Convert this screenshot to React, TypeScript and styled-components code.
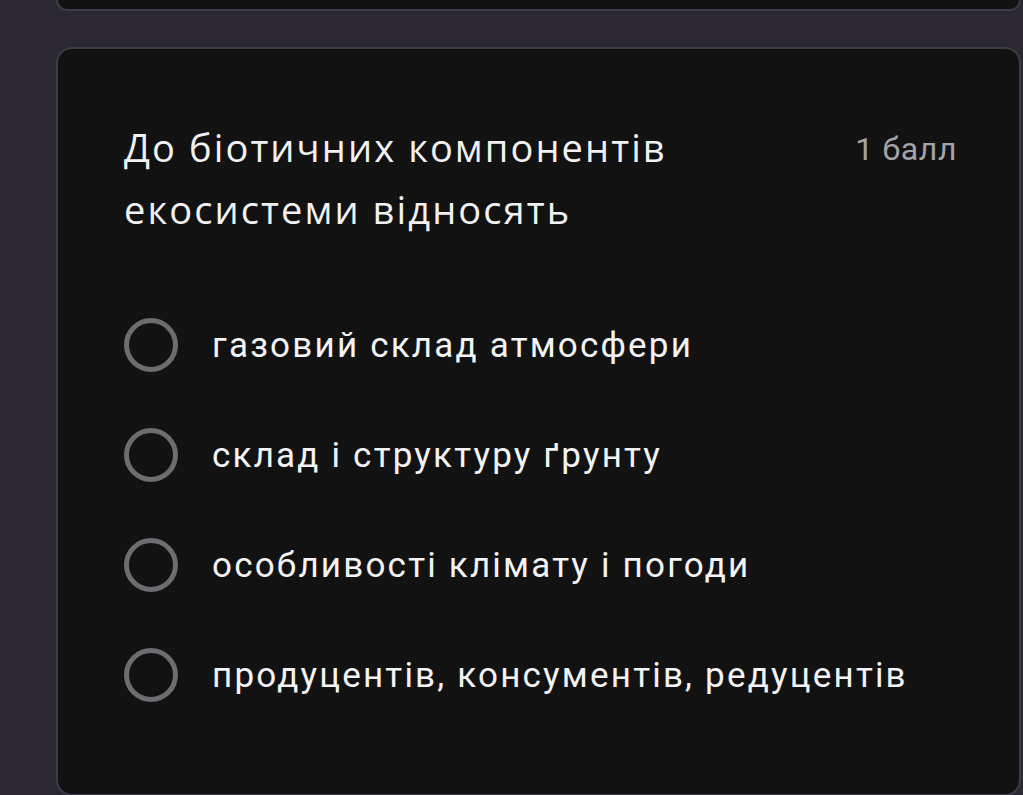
import React from 'react';
import styled, { createGlobalStyle } from 'styled-components';

const GlobalStyle = createGlobalStyle`
  html, body {
    margin: 0;
    padding: 0;
    background: #2b2831;
    overflow: hidden;
  }
`;

const Page = styled.div`
  display: flex;
  flex-direction: column;
  gap: 36px;
  padding: 0 2px 0 56px;
  height: 795px;
  box-sizing: border-box;
`;

// tail of the previous question, scrolled mostly out of view
const PrevCard = styled.div`
  height: 11px;
  flex-shrink: 0;
  box-sizing: border-box;
  background: #121212;
  border: 2px solid #3d3b43;
  border-top: none;
  border-radius: 0 0 16px 16px;
`;

const Card = styled.div`
  flex-shrink: 0;
  height: 749px;
  box-sizing: border-box;
  background: #121212;
  border: 2px solid #3d3b43;
  border-radius: 16px;
  padding: 67px 62px 0 66px;
`;

const Header = styled.div`
  display: flex;
  justify-content: space-between;
  align-items: flex-start;
`;

const Title = styled.div`
  font-family: "Open Sans", sans-serif;
  font-size: 38px;
  letter-spacing: 2.1px;
  line-height: 62px;
  color: #f1f1f3;
  width: 620px;
`;

const Points = styled.div`
  font-family: Roboto, sans-serif;
  font-size: 32px;
  letter-spacing: 0.6px;
  line-height: 62px;
  color: #a3a3a8;
  white-space: nowrap;
  margin-top: 2px;
`;

const Options = styled.div`
  display: flex;
  flex-direction: column;
  gap: 56px;
  margin-top: 78px;
`;

const Option = styled.label`
  display: flex;
  align-items: center;
  gap: 34px;
  height: 54px;
`;

const Radio = styled.span`
  width: 54px;
  height: 54px;
  box-sizing: border-box;
  border: 5px solid #6c6c71;
  border-radius: 50%;
  flex-shrink: 0;
`;

const OptionText = styled.span`
  font-family: Roboto, sans-serif;
  font-size: 35px;
  letter-spacing: 2.2px;
  color: #f3f3f5;
`;

const answers = [
  'газовий склад атмосфери',
  'склад і структуру ґрунту',
  'особливості клімату і погоди',
  'продуцентів, консументів, редуцентів',
];

export default function App() {
  return (
    <>
      <GlobalStyle />
      <Page>
        <PrevCard />
        <Card>
          <Header>
            <Title>До біотичних компонентів екосистеми відносять</Title>
            <Points>1 балл</Points>
          </Header>
          <Options>
            {answers.map((a) => (
              <Option key={a}>
                <Radio />
                <OptionText>{a}</OptionText>
              </Option>
            ))}
          </Options>
        </Card>
      </Page>
    </>
  );
}
